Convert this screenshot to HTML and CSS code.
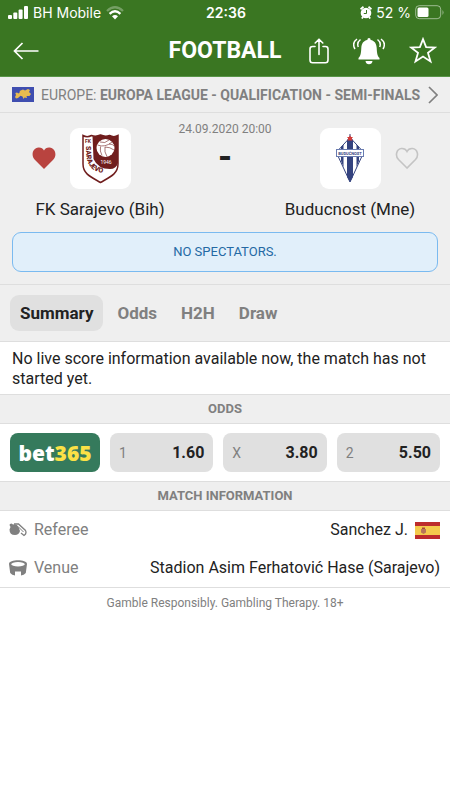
FILE: index.html
```
<!doctype html>
<html lang="en">
<head>
  <meta charset="utf-8">
  <meta name="viewport" content="width=device-width, initial-scale=1">
  <title>Football</title>
  <link rel="stylesheet" href="styles.css">
</head>
<body>
  <header class="header">
    <div class="status">
      <div class="status-left">
        <svg width="20" height="13" viewBox="0 0 20 13" fill="#fff"><rect y="9" width="4" height="4" rx="1"/><rect x="5.3" y="6.500" width="4" height="6.500" rx="1"/><rect x="10.600" y="3.500" width="4" height="9.500" rx="1"/><rect x="16" width="4" height="13" rx="1"/></svg>
        <span>BH Mobile</span>
        <svg width="18" height="14" viewBox="0 0 18 14" fill="none" stroke="#fff" stroke-width="2.300"><path d="M1 5Q9-2.500 17 5" opacity=".3"/><path d="M3.600 7.800Q9 2.800 14.400 7.800"/><path d="M9 13.500L6 10.300Q9 7.800 12 10.300Z" fill="#fff" stroke="none"/></svg>
      </div>
      <b>22:36</b>
      <div class="status-right">
        <svg width="12" height="13" viewBox="0 0 12 13"><circle cx="6" cy="7" r="5.300" fill="#fff"/><path d="M.5 3.200L3.500 .8M11.500 3.200L8.500 .8M3 11L1.800 12.500M9 11L10.200 12.500" stroke="#fff" stroke-width="1.800"/><path d="M6.500 4V7.500H3.800" fill="none" stroke="#3a7622"/></svg>
        <span>52 %</span>
        <svg width="29" height="15" viewBox="0 0 29 15"><rect x=".7" y=".7" width="25" height="13" rx="3.500" fill="none" stroke="#fff" opacity=".5"/><rect x="2.500" y="2.500" width="11" height="9.500" rx="1.500" fill="#fff"/><path d="M27.500 5Q29.500 7.500 27.500 10Z" fill="#fff" opacity=".5"/></svg>
      </div>
    </div>
    <nav class="nav">
      <button class="icon-btn back" aria-label="Back">
        <svg width="26" height="18" viewBox="0 0 26 18" fill="none" stroke="#fff" stroke-width="1.700"><path d="M25.500 9H1.500M9.500 1L1.500 9L9.500 17"/></svg>
      </button>
      <h1>FOOTBALL</h1>
      <div class="nav-actions">
        <button class="icon-btn" aria-label="Share">
          <svg width="20" height="26" viewBox="0 0 20 26" fill="none" stroke="#fff" stroke-width="1.600" stroke-linecap="round" stroke-linejoin="round"><path d="M6 8.500H3.500Q1 8.500 1 11V22Q1 24.700 3.500 24.700H16.500Q19 24.700 19 22V11Q19 8.500 16.500 8.500H14M10 16.500V1.500M6.200 5L10 1.200L13.800 5"/></svg>
        </button>
        <button class="icon-btn" aria-label="Notifications">
          <svg width="32" height="28" viewBox="0 0 32 28"><path d="M16 1Q17.600 1 17.700 3C21.500 3.700 23.500 6.500 23.700 11C24 17 24.500 19 26.500 21V22.500H5.500V21C7.500 19 8 17 8.300 11C8.500 6.500 10.500 3.700 14.300 3Q14.400 1 16 1ZM12.500 24H19.500Q19 27.200 16 27.200T12.500 24Z" fill="#fff"/><path d="M4 2Q-1.500 6 2 12M7.500 2.500Q3.500 5.500 5.300 10M28 2Q33.500 6 30 12M24.500 2.500Q28.500 5.500 26.700 10" fill="none" stroke="#fff" stroke-width="1.500"/></svg>
        </button>
        <button class="icon-btn" aria-label="Add to favourites">
          <svg width="28" height="27" viewBox="0 0 28 27" fill="none" stroke="#fff" stroke-width="1.800"><path d="M14 2.200L17.100 10.200L26 10.500L19 15.900L21.500 24.500L14 19.500L6.500 24.500L9 15.900L2 10.500L10.900 10.200Z"/></svg>
        </button>
      </div>
    </nav>
  </header>

  <main>
    <a class="league" href="#">
      <svg width="22" height="15" viewBox="0 0 22 15"><rect width="22" height="15" fill="#3f4eb0"/><path d="M3 10L4 8L3.300 6L5 5.500L6.500 6.500L8 5L7.500 4L11 2.500L13 3.500L16 2L18 3L17 5L19 7L17.500 9L14.500 9L15 11L12.500 10.500L11.500 12L10.500 9.500L8.500 8.800L6 11L4 11.500Z" fill="#e8bb50"/></svg>
      <span class="league-name">EUROPE: <b>EUROPA LEAGUE - QUALIFICATION - SEMI-FINALS</b></span>
      <svg width="10" height="18" viewBox="0 0 10 18" fill="none" stroke="#808080" stroke-width="1.700"><path d="M1 1L9 9L1 17"/></svg>
    </a>

    <section class="match">
      <div class="teams">
        <div class="team">
          <button class="icon-btn heart-left" aria-label="Remove FK Sarajevo from favourites">
            <svg width="24" height="23" viewBox="0 0 24 23"><path d="M12 22L2.800 12.800C-1.300 8.500.5 1 6.500 .5C9 .3 11 1.500 12 3.500C13 1.500 15 .3 17.500 .5C23.500 1 25.300 8.500 21.200 12.800Z" fill="#b9433f"/></svg>
          </button>
          <div class="crest">
            <svg width="37" height="50" viewBox="0 0 37 50">
              <path d="M1 1.500Q5 4 9.500 1.500Q14 3 18.500 1Q23 3 27.500 1.500Q32 4 36 1.500V30C36 40 28 43 18.500 48.500C9 43 1 40 1 30Z" fill="#fff" stroke="#701d1d" stroke-width="1.500"/>
              <path d="M10.500 2Q15 3 18.500 1Q23 3 27.500 1.500Q32 4 36 1.500V29Q34 35 28 35Q16 35 11.500 25Z" fill="#701d1d"/>
              <circle cx="23.500" cy="14" r="9" fill="#fff"/>
              <path d="M15.500 11Q23 14 30 8M18 8Q23 10 27 6M23 13Q22 18 25 22.500M18.500 12.500Q17.500 17 20 21.500M23 13Q28 13 32 16M27 10Q31 10 32 12" fill="none" stroke="#701d1d" stroke-width=".6"/>
              <text x="24" y="30" class="crest-year">1946</text>
              <text x="6" y="9" class="crest-fk">FK</text>
              <path id="crest-curve" d="M4 12C4 30 7 40 29 39" fill="none"/>
              <text class="crest-name"><textPath href="#crest-curve">SARAJEVO</textPath></text>
            </svg>
          </div>
          <div class="team-name">FK Sarajevo (Bih)</div>
        </div>
        <div class="score">
          <time datetime="2020-09-24T20:00">24.09.2020 20:00</time>
          <strong>-</strong>
        </div>
        <div class="team">
          <div class="crest">
            <svg width="28" height="50" viewBox="0 0 28 50">
              <path d="M14 3.500L26.500 17V21L14 48L1.500 21V17Z" fill="#fff" stroke="#34437f"/>
              <path d="M11 6L14 3L17 6V43L14 48L11 43ZM5 13L7.500 10.500V33L5 27ZM20.500 10.500L23 13V27L20.500 33Z" fill="#34437f"/>
              <path d="M14 0V3" stroke="#34437f"/>
              <path d="M14 1L15 3H17L15.800 4.500L16.500 6.500H11.500L12.200 4.500L11 3H13Z" fill="#d13a37"/>
              <rect x=".5" y="15.500" width="27" height="7" fill="#fff" stroke="#697bb0"/>
              <text x="14" y="20.500" class="crest-band">BUDUĆNOST</text>
            </svg>
          </div>
          <button class="icon-btn heart-right" aria-label="Add Buducnost to favourites">
            <svg width="24" height="23" viewBox="0 0 24 23"><path d="M12 21L3.500 12.500C-.2 8.500 1.500 2 6.500 1.500C9 1.300 11 2.500 12 4.500C13 2.500 15 1.300 17.500 1.500C22.500 2 24.200 8.500 20.500 12.500Z" fill="none" stroke="#c4c4c4" stroke-width="1.600"/></svg>
          </button>
          <div class="team-name">Buducnost (Mne)</div>
        </div>
      </div>
      <p class="notice">NO SPECTATORS.</p>
    </section>

    <div class="tabs">
      <button class="tab active">Summary</button>
      <button class="tab">Odds</button>
      <button class="tab">H2H</button>
      <button class="tab">Draw</button>
    </div>

    <p class="message">No live score information available now, the match has not started yet.</p>

    <h2>ODDS</h2>
    <div class="odds">
      <a class="bookmaker" href="#">bet<span>365</span></a>
      <button class="odd"><span>1</span><b>1.60</b></button>
      <button class="odd"><span>X</span><b>3.80</b></button>
      <button class="odd"><span>2</span><b>5.50</b></button>
    </div>

    <h2>MATCH INFORMATION</h2>
    <dl class="info">
      <div class="info-row">
        <dt>
          <svg width="18" height="14" viewBox="0 0 18 14"><path d="M.5 2Q.5 .5 2.500 .5L4 1.500Q8 .5 9.500 4L11 8Q10 12 6 12Q.5 12 .5 6.500L1.500 4Z" fill="#808080"/><path d="M5 1H9.500L16.500 7.500Q18 10.500 15 12.500L12 10" fill="none" stroke="#808080" stroke-width="1.300"/><path d="M9 3.500L14.500 9" stroke="#808080"/></svg>
          Referee
        </dt>
        <dd>Sanchez J.
          <svg width="25" height="17" viewBox="0 0 25 17"><rect width="25" height="17" fill="#bd2c2c"/><rect y="4" width="25" height="9" fill="#f4ca4c"/><path d="M6 7H11V10.500L8.500 12L6 10.500Z" fill="#b87559"/><path d="M7 5.500H10V7H7Z" fill="#a6463a"/></svg>
        </dd>
      </div>
      <div class="info-row">
        <dt>
          <svg width="18" height="16" viewBox="0 0 18 16"><path d="M0 4C0-1 18-1 18 4L16.800 13Q15 15 12 15.500V11.500H6V15.500Q3 15 1.200 13Z" fill="#808080"/><ellipse cx="9" cy="4.200" rx="6.800" ry="2.200" fill="#fff"/></svg>
          Venue
        </dt>
        <dd>Stadion Asim Ferhatović Hase (Sarajevo)</dd>
      </div>
    </dl>
  </main>
  <footer>Gamble Responsibly. Gambling Therapy. 18+</footer>
</body>
</html>
```
FILE: styles.css
```
* {
  box-sizing: border-box;
}

body {
  margin: 0;
  background: #fff;
  color: #222;
  font-family: Roboto, "Liberation Sans", sans-serif;
  font-size: 16px;
  line-height: 20px;
}

svg {
  display: block;
  flex-shrink: 0;
}

button {
  border: 0;
  background: none;
  font-family: inherit;
  cursor: pointer;
}

a {
  color: inherit;
  text-decoration: none;
}

.icon-btn {
  padding: 0;
}

/* top bar */
.header {
  background: #3a7622;
  color: #fff;
  border-bottom: 1px solid #589548;
}

.status,
.nav {
  display: grid;
  grid-template-columns: 1fr auto 1fr;
  align-items: center;
}

.status {
  height: 25px;
  padding: 0 6px 0 8px;
  font-family: Inter, sans-serif;
  font-size: 14px;
}

.status b {
  font-weight: 600;
}

.status-left,
.status-right {
  display: flex;
  align-items: center;
  gap: 5px;
}

.status-right {
  justify-content: flex-end;
  gap: 4px;
}

.nav {
  height: 51px;
  padding: 0 13px;
}

.back {
  justify-self: start;
}

h1 {
  margin: 0;
  font-size: 23px;
  font-weight: 700;
}

.nav-actions {
  display: flex;
  align-items: center;
  justify-content: flex-end;
  gap: 24px;
}

/* league */
.league {
  display: flex;
  align-items: center;
  height: 36px;
  padding: 0 12px;
  gap: 7px;
  background: #efefef;
  border-bottom: 1px solid #dedede;
  color: #808080;
  font-size: 14px;
}

.league-name {
  flex: 1;
  white-space: nowrap;
}

/* match */
.match {
  padding: 8px 12px 12px;
  background: #efefef;
  border-bottom: 1px solid #dedede;
}

.teams {
  display: grid;
  grid-template-columns: 1fr 50px 1fr;
  margin: 0 -12px;
}

.team {
  display: grid;
  grid-template-columns: 1fr 61px 1fr;
  align-items: center;
  column-gap: 14px;
  padding-top: 7px;
}

.crest {
  grid-column: 2;
  display: flex;
  align-items: center;
  justify-content: center;
  height: 61px;
  border-radius: 9px;
  background: #fff;
}

.heart-left {
  justify-self: end;
}

.heart-right {
  justify-self: start;
}

.team-name {
  grid-column: 1 / 4;
  margin-top: 10px;
  text-align: center;
  font-size: 17px;
}

.crest-year {
  font-size: 5px;
  fill: #fff;
  text-anchor: middle;
}

.crest-fk {
  font-size: 5px;
  font-weight: 700;
  fill: #701d1d;
  text-anchor: middle;
}

.crest-name {
  font-size: 7px;
  font-weight: 900;
  fill: #701d1d;
}

.crest-band {
  font-size: 4px;
  font-weight: 700;
  fill: #34437f;
  text-anchor: middle;
}

.score {
  display: flex;
  flex-direction: column;
  align-items: center;
  white-space: nowrap;
}

.score time {
  color: #808080;
  font-size: 12px;
  line-height: 16px;
}

.score strong {
  font-size: 36px;
  line-height: 40px;
}

.notice {
  margin: 13px 0 0;
  padding: 9px;
  border: 1px solid #7abaf0;
  border-radius: 9px;
  background: #e1effa;
  color: #2469a4;
  text-align: center;
  font-size: 13px;
}

/* tabs */
.tabs {
  display: flex;
  padding: 10px;
  gap: 4px;
  background: #efefef;
  border-bottom: 1px solid #dedede;
}

.tab {
  height: 36px;
  padding: 0 10px;
  border-radius: 9px;
  color: #808080;
  font-size: 17px;
  font-weight: 700;
}

.active {
  background: #e0e0e0;
  color: #222;
}

.message {
  margin: 0;
  padding: 7px 12px 5px;
}

h2 {
  margin: 0;
  padding: 4px;
  border: solid #dedede;
  border-width: 1px 0;
  background: #efefef;
  color: #808080;
  text-align: center;
  font-size: 13px;
  font-weight: 700;
}

/* odds */
.odds {
  display: grid;
  grid-template-columns: 90px 1fr 1fr 1fr;
  gap: 10px;
  padding: 9px 10px;
}

.bookmaker,
.odd {
  display: flex;
  align-items: center;
  height: 39px;
  border-radius: 8px;
}

.bookmaker {
  justify-content: center;
  background: #357a5c;
  color: #fff;
  font-family: "Open Sans", sans-serif;
  font-size: 21px;
  font-weight: 800;
}

.bookmaker span {
  color: #fbe146;
}

.odd {
  justify-content: space-between;
  padding: 0 9px;
  background: #e0e0e0;
  color: #222;
  font-size: 16px;
}

.odd span {
  color: #808080;
  font-size: 14px;
}

/* match information */
.info {
  margin: 0;
  border-bottom: 1px solid #dedede;
}

.info-row {
  display: flex;
  align-items: center;
  justify-content: space-between;
  height: 38px;
  padding: 0 10px 0 9px;
}

.info dt,
.info dd {
  display: flex;
  align-items: center;
  gap: 7px;
  margin: 0;
}

.info dt {
  color: #808080;
}

footer {
  padding: 5px 12px;
  color: #808080;
  text-align: center;
  font-size: 12px;
}
```
